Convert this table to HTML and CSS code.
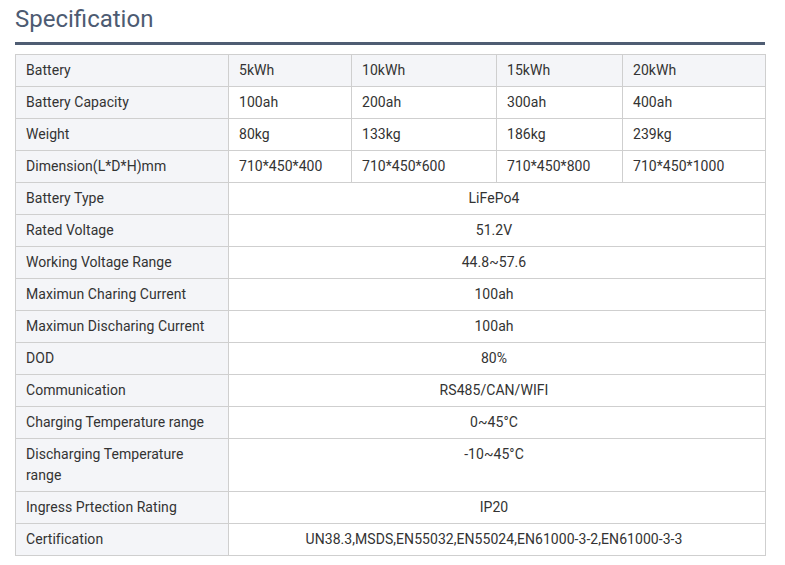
FILE: index.html
```html
<!DOCTYPE html>
<html>
<head>
<meta charset="utf-8">
<link rel="stylesheet" href="styles.css">
</head>
<body>
<div class="page">
  <h2 class="title">Specification</h2>
  <table class="spec">
    <colgroup>
      <col class="c1"><col class="c2"><col class="c3"><col class="c4"><col class="c5">
    </colgroup>
    <tr class="head"><td class="label">Battery</td><td>5kWh</td><td>10kWh</td><td>15kWh</td><td>20kWh</td></tr>
    <tr><td class="label">Battery Capacity</td><td>100ah</td><td>200ah</td><td>300ah</td><td>400ah</td></tr>
    <tr><td class="label">Weight</td><td>80kg</td><td>133kg</td><td>186kg</td><td>239kg</td></tr>
    <tr><td class="label">Dimension(L*D*H)mm</td><td>710*450*400</td><td>710*450*600</td><td>710*450*800</td><td>710*450*1000</td></tr>
    <tr><td class="label">Battery Type</td><td class="center" colspan="4">LiFePo4</td></tr>
    <tr><td class="label">Rated Voltage</td><td class="center" colspan="4">51.2V</td></tr>
    <tr><td class="label">Working Voltage Range</td><td class="center" colspan="4">44.8~57.6</td></tr>
    <tr><td class="label">Maximun Charing Current</td><td class="center" colspan="4">100ah</td></tr>
    <tr><td class="label">Maximun Discharing Current</td><td class="center" colspan="4">100ah</td></tr>
    <tr><td class="label">DOD</td><td class="center" colspan="4">80%</td></tr>
    <tr><td class="label">Communication</td><td class="center" colspan="4">RS485/CAN/WIFI</td></tr>
    <tr><td class="label">Charging Temperature range</td><td class="center" colspan="4">0~45°C</td></tr>
    <tr class="tall"><td class="label">Discharging Temperature range</td><td class="center" colspan="4">-10~45°C</td></tr>
    <tr><td class="label">Ingress Prtection Rating</td><td class="center" colspan="4">IP20</td></tr>
    <tr><td class="label">Certification</td><td class="center" colspan="4">UN38.3,MSDS,EN55032,EN55024,EN61000-3-2,EN61000-3-3</td></tr>
  </table>
</div>
</body>
</html>
```

FILE: styles.css
```css
html, body {
  margin: 0;
  padding: 0;
  background: #ffffff;
}
.page {
  width: 750px;
  padding: 0 0 0 15px;
  font-family: Roboto, "Liberation Sans", sans-serif;
}
.title {
  margin: 0;
  padding: 4px 0 0 0;
  height: 38px;
  font-size: 24px;
  font-weight: 400;
  line-height: 30px;
  color: #4d5b72;
  border-bottom: 3px solid #4f5d73;
  box-sizing: content-box;
}
.spec {
  margin-top: 9px;
  width: 750px;
  border-collapse: collapse;
  table-layout: fixed;
  font-size: 14px;
  letter-spacing: 0.05px;
  color: #333333;
}
.c1 { width: 213px; }
.c2 { width: 123px; }
.c3 { width: 145px; }
.c4 { width: 126px; }
.c5 { width: 143px; }
.spec td {
  border: 1px solid #cfcfcf;
  height: 32px;
  padding: 0 10px;
  box-sizing: border-box;
  line-height: 21px;
  vertical-align: middle;
  background: #ffffff;
}
.spec td.label {
  background: #f4f5f8;
}
.spec tr.head td {
  background: #f4f5f8;
}
.spec td.center {
  text-align: center;
  padding: 0 16px 0 10px;
}
.spec tr.tall td {
  height: 53px;
  vertical-align: top;
  padding-top: 5px;
}
```
